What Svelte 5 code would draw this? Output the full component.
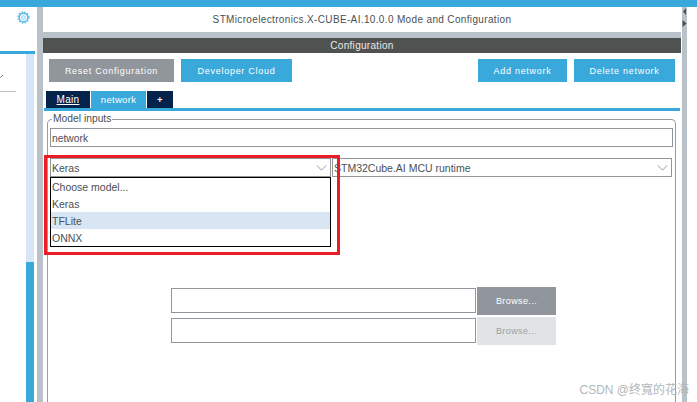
<script>
	const models = ['Choose model...', 'Keras', 'TFLite', 'ONNX'];
	let selected = 'TFLite';
</script>

<div class="page">
	<div class="top-bar"></div>
	<div class="workspace">
		<aside class="sidebar">
			<div class="sidebar-head">
				<svg class="gear" viewBox="0 0 14 14" aria-hidden="true">
					<circle cx="7" cy="7" r="4.6" fill="none" stroke="#5cb8e6" stroke-width="1.6" />
					<circle cx="7" cy="7" r="5.9" fill="none" stroke="#5cb8e6" stroke-width="1.5" stroke-dasharray="1.6 1.5" />
					<circle cx="7" cy="7" r="1.9" fill="none" stroke="#6fc0ea" stroke-width="1" />
				</svg>
			</div>
			<div class="sidebar-body">
				<div class="tree">
					<svg class="tree-arrow" viewBox="0 0 4 6" aria-hidden="true">
						<path d="M-2 1 L0.5 3.5 L3 1" fill="none" stroke="#777" stroke-width="1" />
					</svg>
					<div class="tree-line"></div>
				</div>
				<div class="sidebar-scroll"><div class="sidebar-thumb"></div></div>
			</div>
		</aside>
		<div class="splitter"></div>

		<main class="main">
			<header class="title">STMicroelectronics.X-CUBE-AI.10.0.0 Mode and Configuration</header>
			<div class="title-gap"></div>
			<div class="section-bar">Configuration</div>

			<div class="toolbar">
				<button class="btn grey wide">Reset Configuration</button>
				<button class="btn blue cloud">Developer Cloud</button>
				<span class="spacer"></span>
				<button class="btn blue add">Add network</button>
				<button class="btn blue del">Delete network</button>
			</div>

			<nav class="tabs">
				<span class="tab dark main-tab"><u>Main</u></span>
				<span class="tab active">network</span>
				<span class="tab dark plus">+</span>
			</nav>

			<fieldset class="inputs">
				<legend>Model inputs</legend>
				<div class="name-field">network</div>

				<div class="selects">
					<div class="select model">
						<span>Keras</span>
						<svg class="chevron" viewBox="0 0 12 7" aria-hidden="true"><path d="M0.5 0.5 L6 6 L11.5 0.5" fill="none" stroke="#808890" stroke-width="1" /></svg>
						<ul class="menu">
							{#each models as model}
								<li class:selected={model === selected}>{model}</li>
							{/each}
						</ul>
					</div>
					<div class="select runtime">
						<span>STM32Cube.AI MCU runtime</span>
						<svg class="chevron" viewBox="0 0 12 7" aria-hidden="true"><path d="M0.5 0.5 L6 6 L11.5 0.5" fill="none" stroke="#808890" stroke-width="1" /></svg>
					</div>
				</div>

				<div class="files">
					<div class="file-row">
						<div class="file-input"></div>
						<button class="browse">Browse...</button>
					</div>
					<div class="file-row">
						<div class="file-input"></div>
						<button class="browse off">Browse...</button>
					</div>
				</div>
			</fieldset>
		</main>

		<div class="right-rail">
			<svg class="rail-arrows" viewBox="0 0 5 20" aria-hidden="true">
				<path d="M4 1 L1 4.5 L4 8 Z" fill="#4c4f51" />
				<path d="M0.5 13 L4.5 16.5 L0.5 20 Z" fill="#4c4f51" />
			</svg>
		</div>
	</div>

	<div class="highlight"></div>
	<div class="watermark">CSDN @终寬的花海</div>
</div>

<style>
	:global(body) {
		margin: 0;
		background: #fff;
	}

	.page {
		position: relative;
		width: 697px;
		height: 402px;
		overflow: hidden;
		display: flex;
		flex-direction: column;
		font-family: "Liberation Sans", Arial, sans-serif;
		color: #4a4f55;
	}

	.top-bar {
		height: 7px;
		flex: none;
		background: #39a9dc;
	}

	.workspace {
		flex: 1;
		display: flex;
		min-height: 0;
	}

	.sidebar {
		width: 37px;
		flex: none;
		display: flex;
		flex-direction: column;
	}

	.sidebar-head {
		flex: none;
		border-bottom: 3px solid #39a9dc;
		margin-right: 2px;
		display: flex;
		justify-content: flex-end;
		align-items: flex-start;
		padding: 4px 5px 0 0;
		box-sizing: border-box;
		height: 47px;
	}

	.gear {
		width: 13px;
		height: 13px;
	}

	.sidebar-body {
		flex: 1;
		display: flex;
	}

	.tree {
		width: 26px;
		flex: none;
		padding-top: 20px;
	}

	.tree-arrow {
		display: block;
		width: 4px;
		height: 6px;
	}

	.tree-line {
		width: 16px;
		height: 1px;
		margin-top: 11px;
		background: #b8c2c8;
	}

	.sidebar-scroll {
		width: 8px;
		flex: none;
		display: flex;
		align-items: flex-end;
		background: #d6e6f4;
	}

	.sidebar-thumb {
		width: 100%;
		height: 140px;
		background: #39a9dc;
	}

	.splitter {
		width: 6px;
		flex: none;
		background: #b8c2c8;
	}

	.main {
		width: 638px;
		flex: none;
		display: flex;
		flex-direction: column;
		min-height: 0;
	}

	.title {
		height: 25px;
		flex: none;
		display: flex;
		align-items: center;
		justify-content: center;
		font-size: 10px;
		letter-spacing: 0.35px;
	}

	.title-gap {
		height: 6px;
		flex: none;
		background: #b8c2c8;
	}

	.section-bar {
		height: 15px;
		flex: none;
		background: #505251;
		color: #e8eaea;
		display: flex;
		align-items: center;
		justify-content: center;
		font-size: 10px;
		letter-spacing: 0.3px;
	}

	.toolbar {
		display: flex;
		flex: none;
		gap: 7px;
		padding: 6px 6px 0;
		height: 23px;
	}

	.spacer {
		flex: 1;
	}

	.btn {
		border: 0;
		padding: 0;
		color: #fff;
		font: 9px "Liberation Sans", Arial, sans-serif;
		letter-spacing: 0.72px;
	}

	.grey {
		background: #90969c;
	}

	.blue {
		background: #39a9dc;
	}

	.wide {
		width: 125px;
	}

	.cloud {
		width: 111px;
	}

	.add {
		width: 89px;
	}

	.del {
		width: 101px;
	}

	.tabs {
		display: flex;
		flex: none;
		gap: 1px;
		margin: 9px 1px 0;
		padding-left: 2px;
		height: 17px;
		border-bottom: 3px solid #39a9dc;
	}

	.tab {
		display: flex;
		align-items: center;
		justify-content: center;
		color: #fff;
		font-size: 9.5px;
		letter-spacing: 0.3px;
	}

	.dark {
		background: #04234a;
	}

	.main-tab {
		width: 44px;
		font-size: 10px;
	}

	.active {
		width: 55px;
		background: #39a9dc;
	}

	.plus {
		width: 26px;
		font-weight: bold;
	}

	.inputs {
		flex: 1;
		min-height: 0;
		min-width: 0;
		margin: 3px 5px 0 4px;
		padding: 0 2px;
		border: 1px solid #989c9f;
		border-bottom: 0;
		border-radius: 5px 5px 0 0;
	}

	legend {
		margin-left: 2px;
		padding: 0 1px;
		font-size: 10.3px;
		line-height: 10px;
	}

	.name-field {
		height: 19px;
		margin-top: 4px;
		box-sizing: border-box;
		border: 1px solid #90969c;
		padding-left: 1px;
		font-size: 10.3px;
		line-height: 19px;
	}

	.selects {
		display: flex;
		gap: 1px;
		margin: 11px 1px 0 0;
	}

	.select {
		position: relative;
		height: 19px;
		box-sizing: border-box;
		border: 1px solid #90969c;
		display: flex;
		align-items: center;
		justify-content: space-between;
		padding: 0 3px 0 1px;
		font-size: 10.5px;
	}

	.model {
		width: 281px;
		flex: none;
	}

	.runtime {
		flex: 1;
	}

	.chevron {
		width: 11px;
		height: 6px;
	}

	.menu {
		position: absolute;
		left: -1px;
		right: -1px;
		top: 18px;
		margin: 0;
		padding: 0;
		list-style: none;
		background: #fff;
		border: 1px solid #000;
		z-index: 2;
	}

	.menu li {
		height: 17px;
		padding-left: 1px;
		line-height: 18px;
	}

	.menu .selected {
		background: #d8e6f3;
	}

	.files {
		margin: 110px 0 0 121px;
		display: flex;
		flex-direction: column;
		gap: 2px;
	}

	.file-row {
		display: flex;
		align-items: flex-start;
		gap: 1px;
	}

	.file-input {
		width: 305px;
		height: 25px;
		margin-top: 1px;
		box-sizing: border-box;
		border: 1px solid #90969c;
	}

	.browse {
		width: 79px;
		height: 28px;
		border: 0;
		padding: 0;
		background: #90969c;
		color: #fff;
		font: 9px "Liberation Sans", Arial, sans-serif;
		letter-spacing: 0.4px;
	}

	.off {
		background: #e1e4e7;
		color: #9a9fa4;
	}

	.right-rail {
		width: 5px;
		margin-left: 1px;
		flex: none;
		background: #b8c2c8;
	}

	.rail-arrows {
		display: block;
		width: 5px;
		height: 20px;
	}

	.highlight {
		position: absolute;
		left: 44px;
		top: 155px;
		width: 296px;
		height: 100px;
		box-sizing: border-box;
		border: 3px solid #ec1c24;
		z-index: 3;
		pointer-events: none;
	}

	.watermark {
		position: absolute;
		right: 8px;
		top: 380px;
		font-family: "Liberation Sans", "Noto Sans CJK SC", sans-serif;
		font-size: 12px;
		color: #b4b7ba;
		z-index: 3;
	}
</style>
